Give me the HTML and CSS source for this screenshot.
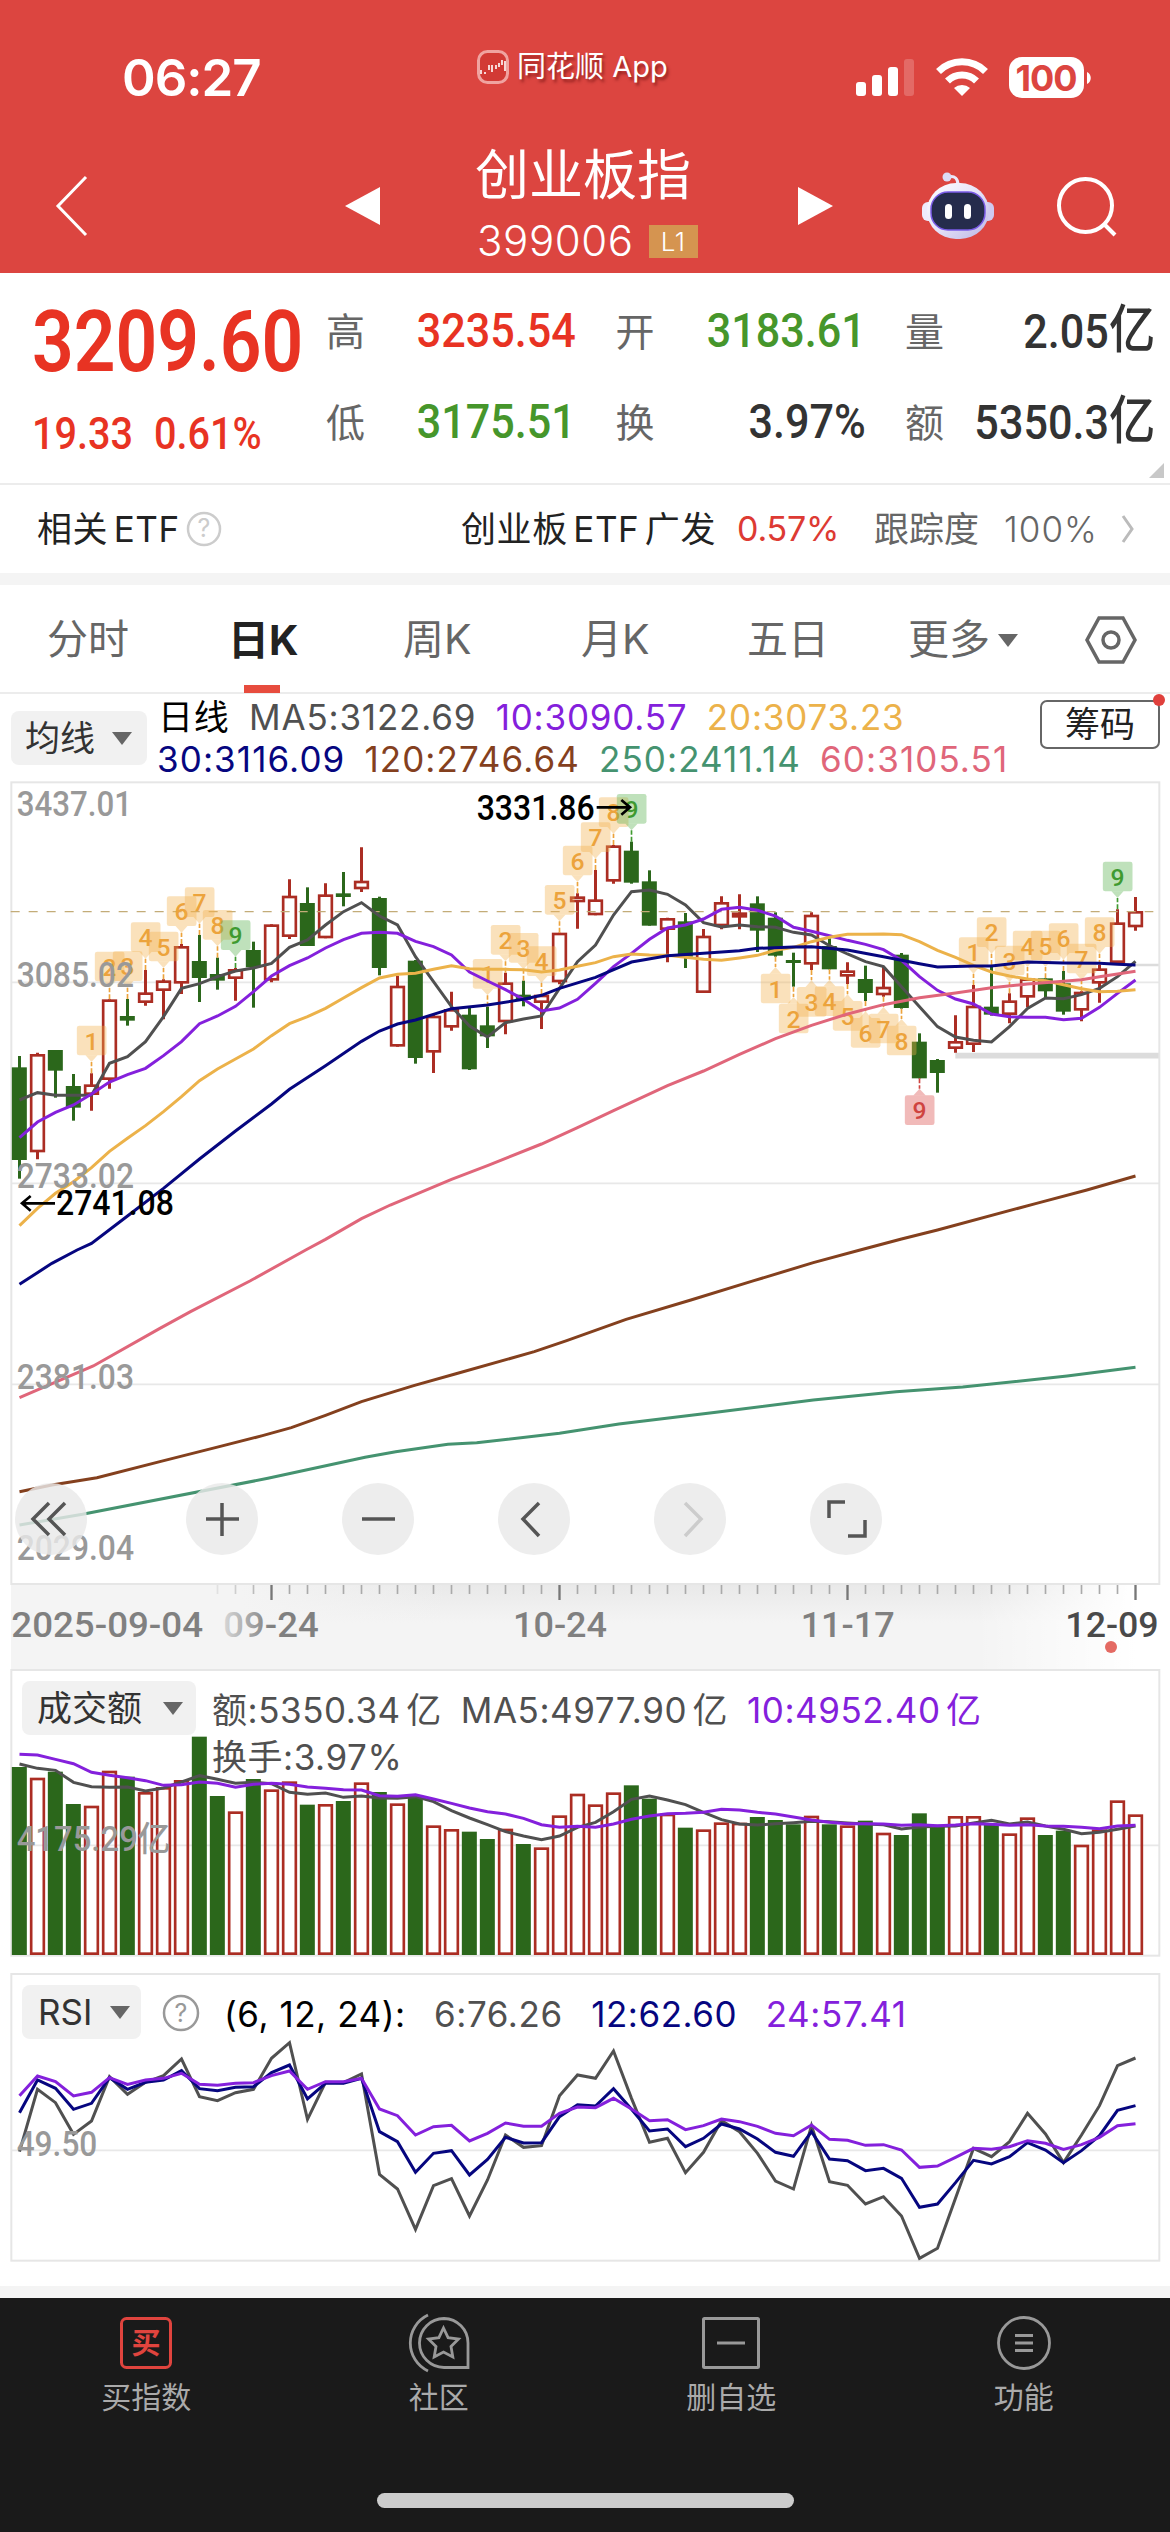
FILE: index.html
```html
<!DOCTYPE html>
<html lang="zh-CN">
<head>
    <meta charset="UTF-8" />
    <title>创业板指 399006</title>
    <link rel="stylesheet" href="styles.css">
</head>
<body>

<header class="header">
    <div class="status">
        <span class="time">06:27</span>
        <span class="app-name">
            <svg width="32" height="34" viewBox="0 0 32 34"><rect x="1.5" y="1.5" width="29" height="31" rx="9" fill="#d23a35" stroke="#f0a3a0" stroke-width="3"/><path d="M4 20v4M8 22v2M12 15v5M15 15v7M19 15v4M22 13v4M25 10v5M28 11v10" stroke="#fff" stroke-width="1.600"/></svg>
            同花顺 App
        </span>
        <svg width="238" height="44" viewBox="0 0 238 44">
            <g fill="#fff">
                <rect x="0" y="26" width="10" height="14" rx="3"/>
                <rect x="16" y="19" width="10" height="21" rx="3"/>
                <rect x="32" y="11" width="10" height="29" rx="3"/>
                <rect x="48" y="3" width="10" height="37" rx="3" opacity=".2"/>
                <path d="M106 40l-8-8a12 12 0 0 1 16 0z"/>
                <rect x="153" y="1" width="75" height="41" rx="13"/>
                <path d="M231 16c5 2 5 10 0 12z"/>
            </g>
            <path d="M82.500 15.500a33.500 33.500 0 0 1 47 0M91.500 25a20.500 20.500 0 0 1 29 0" fill="none" stroke="#fff" stroke-width="7"/>
            <text x="190" y="34.500" class="battery">100</text>
        </svg>
    </div>
    <div class="nav">
        <svg width="36" height="64" viewBox="0 0 36 64"><path d="M32 3L4 32l28 29" fill="none" stroke="#fff" stroke-width="3"/></svg>
        <svg width="36" height="40" viewBox="0 0 36 40"><path d="M0 20L35 1v38z" fill="#fff"/></svg>
        <div class="title">
            <h1>创业板指</h1>
            <p>399006 <span class="level">L1</span></p>
        </div>
        <svg width="36" height="40" viewBox="0 0 36 40"><path d="M35 20L0 1v38z" fill="#fff"/></svg>
        <svg width="74" height="68" viewBox="0 0 74 68">
            <defs>
                <linearGradient id="shell" x1="0" y1="0" x2="1" y2="1"><stop offset="0" stop-color="#fff"/><stop offset=".5" stop-color="#e6e2f8"/><stop offset="1" stop-color="#b9b4e4"/></linearGradient>
            </defs>
            <path d="M27 5c7-2 10 2 10 8" fill="none" stroke="#ece8fa" stroke-width="3"/>
            <circle cx="26" cy="5" r="4.500" fill="#dcdcf6"/>
            <rect x="1" y="30" width="14" height="19" rx="6" fill="#eeeafc"/>
            <rect x="59" y="30" width="14" height="19" rx="6" fill="#cfcaf0"/>
            <rect x="6" y="11" width="62" height="56" rx="29" fill="url(#shell)"/>
            <rect x="10" y="20" width="54" height="38" rx="17" fill="#252c4c" stroke="#7a5be6" stroke-width="1.500"/>
            <rect x="24" y="32" width="7" height="15" rx="3.500" fill="#fff"/>
            <rect x="43" y="32" width="7" height="15" rx="3.500" fill="#fff"/>
        </svg>
        <svg width="60" height="62" viewBox="0 0 60 62"><g fill="none" stroke="#fff" stroke-width="4"><circle cx="28.500" cy="30.500" r="26.500"/><path d="M47 49l11 11"/></g></svg>
    </div>
</header>

<section class="quote">
    <div class="price">
        <span class="num big">3209.60</span>
        <span class="change"><span class="num">19.33</span><span class="num">0.61%</span></span>
    </div>
    <dl class="stats">
        <div><dt>高</dt><dd class="num up">3235.54</dd></div>
        <div><dt>开</dt><dd class="num down">3183.61</dd></div>
        <div><dt>量</dt><dd class="num">2.05<i>亿</i></dd></div>
        <div><dt>低</dt><dd class="num down">3175.51</dd></div>
        <div><dt>换</dt><dd class="num">3.97%</dd></div>
        <div><dt>额</dt><dd class="num">5350.3<i>亿</i></dd></div>
    </dl>
    <span class="corner"></span>
</section>

<section class="etf">
    <span class="etf-label">相关 ETF</span>
    <svg class="help" width="36" height="36" viewBox="0 0 36 36"><circle cx="18" cy="18" r="16" fill="none" stroke="#ccc" stroke-width="2.500"/><text x="18" y="26" class="help-mark">?</text></svg>
    <span class="etf-name">创业板 ETF 广发</span>
    <span class="etf-pct">0.57%</span>
    <span class="etf-track">跟踪度</span>
    <span class="etf-val">100%</span>
    <svg width="14" height="30" viewBox="0 0 14 30"><path d="M2 2l9 13-9 13" fill="none" stroke="#bbb" stroke-width="3"/></svg>
</section>

<nav class="tabs">
    <span>分时</span>
    <span class="active">日K</span>
    <span>周K</span>
    <span>月K</span>
    <span>五日</span>
    <span>更多<b class="caret"></b></span>
    <svg width="52" height="48" viewBox="0 0 52 48"><g fill="none" stroke="#666" stroke-width="3.500"><path d="M14 2h24l12 22-12 22H14L2 24z"/><circle cx="26" cy="24" r="8"/></g></svg>
</nav>

<section class="legend">
    <button class="picker">均线<b class="caret"></b></button>
    <div class="legend-lines">
        <p class="l1"><span class="black">日线</span><span class="ma5">MA5:3122.69</span><span class="ma10">10:3090.57</span><span class="ma20">20:3073.23</span></p>
        <p class="l2"><span class="ma30">30:3116.09</span><span class="ma120">120:2746.64</span><span class="ma250">250:2411.14</span><span class="ma60">60:3105.51</span></p>
    </div>
    <button class="chips">筹码</button>
</section>

<section class="panel kline">
    <svg id="kline" class="plot" viewBox="0 33 3510 2412"></svg>
    <div class="tools">
        <svg viewBox="0 0 72 72"><path d="M34 20L18 36l16 16M50 20L34 36l16 16"/></svg>
        <svg viewBox="0 0 72 72"><path d="M36 20v33M20 36h33"/></svg>
        <svg viewBox="0 0 72 72"><path d="M20 36h33"/></svg>
        <svg viewBox="0 0 72 72"><path d="M41 20L25 36l16 17"/></svg>
        <svg viewBox="0 0 72 72" class="off"><path d="M31 20l16 16-16 17"/></svg>
        <svg viewBox="0 0 72 72"><path d="M19 35V19h16M38 53h17V37"/></svg>
    </div>
</section>

<section class="axis">
    <svg id="axis" viewBox="0 0 3510 252"></svg>
</section>

<section class="panel volume">
    <svg id="volume" class="plot" viewBox="0 27 3510 864"></svg>
    <div class="panel-head">
        <button class="picker">成交额<b class="caret"></b></button>
        <div class="legend-lines">
            <p class="v1"><span class="ma5">额:5350.34 亿</span><span class="ma5">MA5:4977.90 亿</span><span class="ma10">10:4952.40 亿</span></p>
            <p class="v2"><span class="ma5">换手:3.97%</span></p>
        </div>
    </div>
</section>

<section class="panel rsi">
    <svg id="rsi" class="plot" viewBox="0 39 3510 867"></svg>
    <div class="panel-head">
        <button class="picker">RSI<b class="caret"></b></button>
        <svg class="help" width="38" height="38" viewBox="0 0 38 38"><circle cx="19" cy="19" r="17" fill="none" stroke="#999" stroke-width="2.500"/><text x="19" y="28" class="help-mark dark">?</text></svg>
        <p class="r1"><span class="black">(6, 12, 24):</span><span class="ma5">6:76.26</span><span class="ma30">12:62.60</span><span class="ma10">24:57.41</span></p>
    </div>
</section>

<footer class="bottom">
    <a>
        <svg width="62" height="60" viewBox="0 0 62 60"><rect x="6.500" y="5.500" width="49" height="49" rx="5" fill="none" stroke="#e0443e" stroke-width="3"/><text x="31" y="41" class="buy">买</text></svg>
        买指数
    </a>
    <a>
        <svg width="62" height="60" viewBox="0 0 62 60"><g fill="none" stroke="#999" stroke-width="2.800"><path d="M36 5.500a24.500 24.500 0 1 0 0 49h24V30A24.500 24.500 0 0 0 36 5.500z"/><path d="M20 2a31 31 0 0 0 0 56"/><path d="M35.500 15l4.600 9.600 10.400 1.500-7.500 7.400 1.800 10.500-9.300-5-9.300 5 1.800-10.500-7.500-7.400 10.400-1.500z"/></g></svg>
        社区
    </a>
    <a>
        <svg width="62" height="60" viewBox="0 0 62 60"><g fill="none" stroke="#999" stroke-width="3"><rect x="3.500" y="5.500" width="55" height="49" rx="1"/><path d="M17 30h28"/></g></svg>
        删自选
    </a>
    <a>
        <svg width="62" height="60" viewBox="0 0 62 60"><g fill="none" stroke="#999" stroke-width="2.800"><circle cx="31" cy="30" r="25.500"/><path d="M22 22.500h18M22 30h18M22 37.500h18"/></g></svg>
        功能
    </a>
    <span class="home"></span>
</footer>

<script src="chart.js"></script>
</body>
</html>
```
FILE: styles.css
```css
* {
    box-sizing: border-box;
}

body {
    margin: 0;
    width: 1170px;
    height: 2532px;
    overflow: hidden;
    background: #fff;
    color: #333;
    font-family: Inter, "Noto Sans CJK SC", sans-serif;
    font-size: 35px;
    line-height: 1;
}

h1, p, dl, dd {
    margin: 0;
    font-weight: normal;
}

svg {
    display: block;
}

span {
    white-space: nowrap;
}

/* header */
.header {
    height: 273px;
    background: #dc4540;
    color: #fff;
}

.status {
    height: 140px;
    padding-top: 56px;
    display: grid;
    grid-template-columns: 477px 379px auto;
    align-items: start;
}

.time {
    padding-left: 122px;
    font-size: 51px;
    font-weight: 600;
    line-height: 44px;
    letter-spacing: -1px;
}

.app-name {
    display: flex;
    gap: 8px;
    margin-top: -9px;
    align-items: center;
    font-size: 29px;
    line-height: 40px;
    text-shadow: 2px 3px 3px rgba(80, 0, 0, .5);
}

.battery {
    font: 700 36px Inter, sans-serif;
    letter-spacing: -1px;
    fill: #dc4540;
    text-anchor: middle;
}

.nav {
    height: 131px;
    display: grid;
    grid-template-columns: 291px 130px 323px 123px 136px auto;
    align-items: center;
    padding-left: 54px;
}

.title h1 {
    font-size: 54px;
    line-height: 60px;
    margin-top: -7px;
}

.title p {
    display: flex;
    align-items: center;
    gap: 15px;
    height: 34px;
    margin-top: 18px;
    font-size: 42px;
    font-weight: 300;
    letter-spacing: .6px;
    padding-left: 2px;
}

.level {
    width: 49px;
    height: 33px;
    background: #d59450;
    font-size: 26px;
    line-height: 33px;
    text-align: center;
}

/* quote */
.num {
    font-family: Roboto, "Noto Sans CJK SC", sans-serif;
    font-weight: 500;
    transform: scaleX(.9);
    transform-origin: left center;
}

.up { color: #e83323; }
.down { color: #46962b; }

.quote {
    position: relative;
    height: 212px;
    padding: 13px 15px 0 32px;
    display: grid;
    grid-template-columns: 294px auto;
    border-bottom: 2px solid #ececec;
}

.price {
    color: #e83323;
    display: flex;
    flex-direction: column;
}

.big {
    font-size: 85px;
    line-height: 112px;
    font-weight: 600;
    transform: scaleX(.86);
}

.change {
    display: flex;
    gap: 10px;
    font-size: 44px;
    line-height: 73px;
}

.stats {
    display: grid;
    grid-template-columns: repeat(3, 250px);
    grid-template-rows: 91px 91px;
    column-gap: 39.500px;
}

.stats div {
    display: flex;
    justify-content: space-between;
    align-items: center;
}

.stats dt {
    font-size: 39px;
    color: #666;
}

.stats dd {
    font-size: 48.500px;
    transform: scaleX(.89);
    transform-origin: right center;
    white-space: nowrap;
}

.stats i {
    font-style: normal;
    font-size: 52px;
    line-height: 48px;
}

.corner {
    position: absolute;
    right: 6px;
    bottom: 5px;
    border-left: 15px solid transparent;
    border-bottom: 15px solid #c8c8c8;
}

.etf {
    height: 100px;
    border-bottom: 12px solid #f4f4f4;
    display: grid;
    grid-template-columns: 149px 275px 276px 137px 130px 117px auto;
    align-items: center;
    padding-left: 37px;
    font-size: 35px;
    color: #222;
}

.etf-label, .etf-name {
    word-spacing: -5px;
    letter-spacing: .6px;
}

.etf-pct {
    color: #dd3a33;
    font-size: 34px;
    letter-spacing: -0.2px;
}

.etf-track, .etf-val {
    color: #666;
}

.etf-val {
    font-weight: 300;
    letter-spacing: 1px;
}

.help-mark {
    font: 25px Inter, sans-serif;
    fill: #ccc;
    text-anchor: middle;
}

.dark {
    fill: #999;
}

/* tabs */
.tabs {
    height: 109px;
    padding-left: 47px;
    display: grid;
    grid-template-columns: 181px 175px 178px 166px 161px 177px auto;
    align-items: center;
    border-bottom: 2px solid #ececec;
    font-size: 41px;
    line-height: 109px;
    color: #666;
}

.tabs .active {
    color: #222;
    font-weight: 700;
    height: 107px;
    background: linear-gradient(#e74c3e, #e74c3e) 16px 99px / 36px 8px no-repeat;
}

.caret {
    display: inline-block;
    border: 10px solid transparent;
    border-top: 13px solid #666;
    border-bottom: 0;
    margin-left: 8px;
    vertical-align: 7px;
}

/* legends */
.legend {
    height: 87px;
    padding-left: 11px;
    display: grid;
    grid-template-columns: 146px 883px auto;
    align-items: start;
}

.picker {
    border: 0;
    border-radius: 8px;
    background: #f1f1f1;
    color: #333;
    font: inherit;
    padding: 0 15px;
    height: 54px;
    display: flex;
    align-items: center;
    justify-content: space-between;
}

.legend .picker {
    width: 136px;
    margin-top: 17px;
    padding-left: 14px;
}

.legend-lines p, .r1 {
    display: flex;
    line-height: 42px;
    letter-spacing: .55px;
}

.legend-lines .l1 {
    padding: 2px 0 0 1px;
    gap: 19.500px;
    letter-spacing: .8px;
}

.legend-lines .l2 {
    gap: 19px;
    letter-spacing: 1.100px;
}

.chips {
    position: relative;
    width: 120px;
    height: 49px;
    margin-top: 6px;
    padding: 0;
    border: 2px solid #666;
    border-radius: 7px;
    background: #fff;
    color: #222;
    font: inherit;
}

.chips::after {
    content: "";
    position: absolute;
    top: -8px;
    right: -7px;
    width: 12px;
    height: 12px;
    border-radius: 50%;
    background: #e0403c;
}

.black { color: #000; }
.ma5 { color: #505050; }
.ma10 { color: #8420dc; }
.ma20 { color: #ecb24a; }
.ma30 { color: #06067f; }
.ma60 { color: #e0667a; }
.ma120 { color: #84401e; }
.ma250 { color: #459370; }

/* panels: plot and its controls share one grid cell */
.panel {
    display: grid;
}

.panel > * {
    grid-area: 1 / 1;
}

.plot {
    width: 1170px;
}

.kline {
    height: 804px;
}

.tools {
    align-self: end;
    display: grid;
    grid-template-columns: 171px repeat(5, 156px);
    padding: 0 0 30px 15px;
}

.tools svg {
    width: 72px;
    height: 72px;
    border-radius: 50%;
    background: rgba(233, 233, 233, .82);
    fill: none;
    stroke: #555;
    stroke-width: 3.500;
}

.tools .off {
    stroke: #ccc;
}

.axis {
    height: 84px;
    margin: 0 11px;
    background: linear-gradient(90deg, transparent 84%, #fff 98%), linear-gradient(90deg, #f4f4f4 20%, transparent 38%), linear-gradient(#e9e9e9, #f4f4f4 45%);
}

.axis svg {
    width: 1170px;
    margin-left: -11px;
}

.volume {
    height: 288px;
    margin-bottom: 16px;
}

.rsi {
    height: 289px;
    margin-bottom: 24px;
}

.panel-head {
    display: flex;
    align-items: flex-start;
    padding: 12px 0 0 22px;
}

.volume .picker {
    width: 174px;
    margin-right: 16px;
    padding-right: 13px;
}

.volume .legend-lines {
    padding-top: 8px;
}

.v1 {
    gap: 19px;
    word-spacing: -5px;
}

.volume .v2 {
    padding-top: 5px;
}

.rsi .picker {
    width: 119px;
    margin-right: 21px;
    padding: 0 11px 0 16px;
}

.rsi .help {
    margin-top: 9px;
}

.r1 {
    padding: 8px 0 0 24px;
    gap: 28.500px;
}

/* text in the plots, units are a third of a pixel */
.scale, .mark, .date {
    font: 500 103px Roboto, "Noto Sans CJK SC", sans-serif;
    fill: #999;
}

.mark {
    fill: #000;
}

.date {
    font-size: 106px;
    fill: #808080;
}

.td {
    font: 500 74px Roboto, sans-serif;
    text-anchor: middle;
}

/* bottom bar */
.bottom {
    height: 246px;
    border-top: 12px solid #f4f4f4;
    background: #1a1a1a;
    display: grid;
    grid-template-columns: repeat(4, 1fr);
    grid-template-rows: 195px 15px;
    font-size: 30px;
    color: #aaa;
}

.bottom a {
    display: flex;
    flex-direction: column;
    align-items: center;
    padding-top: 15px;
    gap: 9px;
}

.buy {
    font: 700 29px "Noto Sans CJK SC", sans-serif;
    fill: #e0443e;
    text-anchor: middle;
}

.home {
    grid-column: 1 / -1;
    justify-self: center;
    width: 417px;
    height: 15px;
    border-radius: 8px;
    background: #ccc;
}
```
FILE: chart.js
```javascript
const GREEN = '#2b671b';
const RED = '#ab2d23';

// 63 days, plot units are a third of a pixel
const X = i => 58.5 + 54 * i;

// [high, body top, body bottom, low, up]
const candles = [
  [858,892,1170,1226,0],[848,852,1147,1168,1],[840,840,902,983,0],[912,948,1013,1052,0],[910,943,975,1022,1],
  [688,688,930,956,1],[687,738,752,767,0],[600,667,699,707,1],[628,631,663,748,1],[522,528,641,672,1],
  [495,573,624,696,0],[563,612,632,659,0],[594,597,627,692,1],[515,540,592,713,0],[463,463,632,637,1],
  [328,377,501,507,1],[352,399,528,528,0],[340,373,505,505,1],[306,370,381,409,0],[232,332,358,366,1],
  [380,384,594,616,0],[617,647,830,830,1],[570,572,864,881,0],[735,737,848,909,1],[665,717,773,782,1],
  [712,734,898,900,0],[710,766,799,834,0],[608,637,757,793,1],[632,674,690,709,0],[672,674,699,777,1],
  [488,488,637,643,1],[370,379,397,476,1],[300,388,436,436,1],[225,226,335,341,1],[215,242,338,341,0],
  [301,334,467,467,0],[443,444,480,577,1],[429,454,560,594,0],[477,497,669,669,1],[379,396,469,478,1],
  [373,427,443,478,1],[379,400,482,546,0],[427,443,557,560,0],[548,570,579,650,0],[427,434,584,600,1],
  [505,528,598,598,0],[577,601,620,642,1],[587,627,669,693,0],[590,650,676,680,1],[549,554,714,716,0],
  [790,815,925,925,0],[867,870,909,968,0],[736,813,837,848,1],[645,707,825,846,1],[585,710,734,737,0],
  [670,691,735,760,1],[625,625,683,712,1],[625,625,664,683,0],[603,640,725,734,0],[664,665,722,754,1],
  [585,595,641,698,1],[418,457,579,579,1],[381,423,472,482,1]
];

const ma5 = [990,968,976,976,976,880,860,815,740,655,641,620,603,594,580,532,510,465,425,398,438,465,560,635,710,768,801,758,747,738,655,575,525,435,365,360,373,405,458,471,465,470,472,487,495,527,552,575,590,650,710,770,801,811,816,770,715,684,686,674,655,620,574];
const ma10 = [1103,1056,1027,1005,972,936,914,895,857,815,761,738,709,665,618,587,564,534,509,490,487,490,514,530,555,606,633,659,688,723,714,688,640,590,550,508,474,465,447,418,412,421,438,472,484,497,511,523,539,571,620,661,687,702,732,740,742,742,749,745,712,670,630];
const ma20 = [1367,1315,1270,1235,1193,1144,1105,1067,1025,980,932,897,867,837,797,761,740,715,684,653,624,613,610,598,587,596,598,598,599,606,600,589,578,560,552,555,556,562,568,571,564,556,541,532,515,502,493,493,492,494,515,541,562,586,606,618,627,632,644,656,665,664,659];

// slow averages as [day, y]
const ma30 = [[0,1543],[1.8,1480],[3.2,1440],[4,1420],[6,1338],[8,1255],[10,1167],[12,1083],[14,1002],[15,958],[17,887],[19,814],[20,783],[21,762],[22,750],[24,716],[26,705],[28,688],[29,676],[30,655],[32,622],[34,576],[36,557],[38,550],[40,542],[41,535],[43,531],[44,530],[46,540],[48,560],[50,581],[51,591],[53,588],[54,588],[56,576],[58,579],[60,580],[61,583],[62,585]];
const ma60 = [[0,1883],[4.1,1788],[7.8,1675],[9.5,1625],[12.8,1533],[15.9,1440],[17,1408],[19,1346],[20.6,1305],[24,1228],[26,1187],[29,1122],[31,1073],[33,1022],[36,947],[38,903],[40,853],[42,806],[44,766],[46,732],[48,704],[50,683],[52,669],[54,653],[56,642],[58,634],[59,629],[60,620],[62,604]];
const ma120 = [[0,2165],[1.8,2145],[4.3,2123],[7.8,2075],[11.1,2030],[13.5,1997],[15.1,1973],[17,1936],[19,1895],[21.9,1847],[24.2,1812],[28.6,1745],[30.4,1712],[33.7,1648],[37.3,1590],[40.8,1532],[44.1,1478],[46.7,1440],[49,1407],[51,1380],[56.5,1300],[59.3,1260],[62,1218]];
const ma250 = [[0,2265],[3.5,2233],[13.8,2125],[19.2,2062],[20.9,2045],[23.8,2023],[25.4,2018],[30,1990],[33.3,1962],[38.7,1927],[44.1,1890],[48.7,1865],[52.4,1851],[58.2,1818],[62,1792]];

// runs of the nine-count: [first day, length, above the candle]
const counts = [[4, 9, true], [26, 9, true], [42, 9, false], [53, 9, true]];

const volume = [321,353,335,432,437,332,350,396,381,360,230,408,454,357,388,364,434,432,423,367,396,430,411,496,507,515,537,506,552,562,466,401,433,397,376,416,461,503,508,487,488,471,480,493,467,493,496,482,518,525,460,500,468,468,495,520,472,525,512,554,508,421,463];
const vma5 = [312,325,331,367,380,382,381,393,384,366,347,358,370,367,371,397,403,399,412,408,414,415,410,425,452,474,494,515,528,539,528,502,487,455,418,408,420,434,457,479,492,495,491,488,484,485,489,492,494,507,501,499,498,489,481,492,486,498,508,521,517,508,498];
const vma10 = [283,285,298,311,337,346,353,362,376,374,366,370,382,373,370,373,381,385,389,390,407,409,404,417,430,444,455,462,475,494,502,499,502,492,478,468,461,460,457,448,450,457,462,471,480,487,491,491,492,496,494,497,495,491,493,496,494,498,499,502,506,498,496];

const rsi6 = [575,388,428,523,483,350,403,367,347,297,410,422,398,388,295,248,478,367,368,342,643,687,808,677,656,768,660,525,562,557,407,345,355,273,415,547,535,638,577,482,515,580,663,687,497,665,676,732,710,768,895,865,715,565,590,545,460,522,608,525,437,317,294];
const rsi12 = [458,360,385,448,430,353,388,367,360,332,386,392,382,380,338,315,417,370,370,355,515,545,637,580,572,645,598,532,549,548,470,434,438,386,448,513,507,560,535,492,507,537,577,589,515,597,602,632,625,655,742,732,668,601,612,590,548,570,608,572,527,451,437];
const rsi24 = [407,348,365,408,397,353,373,360,355,340,373,376,370,368,347,333,388,365,365,355,447,467,525,500,496,543,520,489,499,499,460,441,443,415,447,482,479,509,497,477,485,499,520,527,495,538,541,556,554,570,622,618,592,565,568,560,542,550,568,554,532,497,491];

function line(data, color, w = 9) {
  const pts = data.map((d, i) => Array.isArray(d) ? `${X(d[0])},${d[1]}` : `${X(i)},${d}`).join(' ');
  return `<polyline points="${pts}" fill="none" stroke="${color}" stroke-width="${w}"/>`;
}

function hline(y, x1 = 33, x2 = 3477, w = 5, color = '#e8e8e8') {
  return `<path d="M${x1} ${y}H${x2}" stroke="${color}" stroke-width="${w}"/>`;
}

function frame(top, bottom) {
  return `<rect x="34" y="${top}" width="3444" height="${bottom - top}" fill="none" stroke="#e6e6e6" stroke-width="6"/>`;
}

function text(x, y, w, str, cls = 'scale') {
  return `<text x="${x}" y="${y}" class="${cls}" textLength="${w}" lengthAdjust="spacingAndGlyphs">${str}</text>`;
}

function candle([high, top, bottom, low, up], i) {
  const x = X(i);
  if (up) {
    return `<path d="M${x} ${high}V${top + 3}M${x} ${bottom - 3}V${low}" stroke="${RED}" stroke-width="9"/>
      <rect x="${x - 19}" y="${top + 4}" width="38" height="${Math.max(bottom - top - 8, 2)}" fill="none" stroke="${RED}" stroke-width="8"/>`;
  }
  return `<path d="M${x} ${high}V${low}" stroke="${GREEN}" stroke-width="9"/>
    <rect x="${x - 23}" y="${top}" width="45" height="${bottom - top}" fill="${GREEN}"/>`;
}

function badge(i, n, above) {
  const x = X(i);
  const edge = above ? candles[i][0] : candles[i][3];
  let bg = '#f2b04c', fg = '#eca33c';
  if (n === 9) [bg, fg] = above ? ['#58b04c', '#3f9a30'] : ['#d94a48', '#cf4440'];
  const y = above ? edge - 143 : edge + 51;
  const tip = above ? `M${x - 18} ${y + 89}h36l-18 20z` : `M${x - 18} ${y}h36l-18 -20z`;
  const dash = above ? `M${x} ${edge}V${y + 109}` : `M${x} ${edge}V${y - 20}`;
  return `<g fill="${bg}" fill-opacity=".38"><rect x="${x - 44}" y="${y}" width="89" height="89" rx="7"/><path d="${tip}"/></g>
    <path d="${dash}" stroke="${fg}" stroke-width="5" stroke-dasharray="15 6"/>
    <text x="${x}" y="${y + 72}" class="td" fill="${fg}">${n}</text>`;
}

let badges = '';
for (const [start, len, above] of counts) {
  for (let n = 0; n < len; n++) badges += badge(start + n, n + 1, above);
}

document.getElementById('kline').innerHTML =
  hline(637) + hline(1240) + hline(1843) +
  hline(857, 2866, 3477, 17, '#dcdcdc') + hline(585, 3370, 3477, 8, '#dcdcdc') +
  frame(37, 2442) +
  candles.map(candle).join('') +
  `<path d="M32 425H3460" stroke="#c3ac78" stroke-width="4" stroke-dasharray="27 27"/>` +
  badges +
  line(ma5, '#505050') + line(ma10, '#8420dc') + line(ma20, '#ecb24a') + line(ma30, '#06067f') +
  line(ma60, '#e0667a') + line(ma120, '#84401e') + line(ma250, '#459370') +
  text(50, 139, 346, '3437.01') + text(50, 652, 352, '3085.02') + text(50, 1255, 352, '2733.02') +
  text(50, 1857, 352, '2381.03') + text(50, 2370, 352, '2029.04') +
  text(168, 1336, 354, '2741.08', 'mark') + text(1430, 149, 354, '3331.86', 'mark') +
  `<g fill="none" stroke="#000" stroke-width="8"><path d="M165 1300H66M92 1278L66 1300l26 22"/><path d="M1790 112h100M1864 90l26 22-26 22"/></g>`;

// date axis
let ticks = '';
for (let i = 11; i <= 62; i++) {
  const major = (i - 14) % 16 === 0;
  ticks += `<path d="M${X(i)} 0V${major ? 45 : 27}" stroke="${major ? '#777' : '#aaa'}" stroke-width="${major ? 7 : 5}" opacity="${Math.min(1, (i - 10) / 4)}"/>`;
}
document.getElementById('axis').innerHTML = ticks +
  `<defs><linearGradient id="fade"><stop offset="0" stop-color="#808080" stop-opacity=".25"/><stop offset=".5" stop-color="#808080"/></linearGradient></defs>` +
  text(34, 156, 575, '2025-09-04', 'date') +
  text(670, 156, 286, '09-24', 'date').replace('class', 'style="fill:url(#fade)" class') +
  text(1539, 156, 282, '10-24', 'date') + text(2402, 156, 282, '11-17', 'date') +
  text(3196, 156, 280, '12-09', 'date').replace('class', 'style="fill:#4a4a4a" class') +
  `<circle cx="3333" cy="186" r="18" fill="#e46a63"/>`;

// turnover
document.getElementById('volume').innerHTML =
  hline(556) + frame(30, 887) +
  volume.map((top, i) => candles[i][4]
    ? `<rect x="${X(i) - 19}" y="${top + 4}" width="38" height="${877 - top}" fill="none" stroke="${RED}" stroke-width="8"/>`
    : `<rect x="${X(i) - 23}" y="${top}" width="45" height="${885 - top}" fill="${GREEN}"/>`).join('') +
  line(vma5, '#505050') + line(vma10, '#8420dc') +
  text(50, 572, 462, '4175.29亿');

document.getElementById('rsi').innerHTML =
  hline(571) + frame(42, 902) +
  line(rsi6, '#505050') + line(rsi12, '#06067f') + line(rsi24, '#8420dc') +
  text(50, 587, 242, '49.50');
```
